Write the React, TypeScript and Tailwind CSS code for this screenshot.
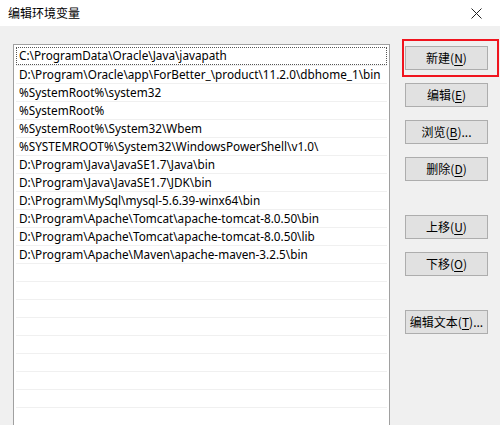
import React from "react";

const items = [
  "C:\\ProgramData\\Oracle\\Java\\javapath",
  "D:\\Program\\Oracle\\app\\ForBetter_\\product\\11.2.0\\dbhome_1\\bin",
  "%SystemRoot%\\system32",
  "%SystemRoot%",
  "%SystemRoot%\\System32\\Wbem",
  "%SYSTEMROOT%\\System32\\WindowsPowerShell\\v1.0\\",
  "D:\\Program\\Java\\JavaSE1.7\\Java\\bin",
  "D:\\Program\\Java\\JavaSE1.7\\JDK\\bin",
  "D:\\Program\\MySql\\mysql-5.6.39-winx64\\bin",
  "D:\\Program\\Apache\\Tomcat\\apache-tomcat-8.0.50\\bin",
  "D:\\Program\\Apache\\Tomcat\\apache-tomcat-8.0.50\\lib",
  "D:\\Program\\Apache\\Maven\\apache-maven-3.2.5\\bin",
];

function Btn({ label, u, tail, mt }: { label: string; u: string; tail?: string; mt: string }) {
  return (
    <div
      className={`${mt} w-[83px] h-[24px] bg-[#e1e1e1] border border-[#adadad] flex items-center justify-center text-[12px] text-black leading-none`}
      style={{ fontFamily: '"Noto Sans CJK SC", sans-serif' }}
    >
      <span>
        {label}(<span className="underline underline-offset-2">{u}</span>){tail}
      </span>
    </div>
  );
}

export default function App() {
  const rows = Array.from({ length: 24 }, (_, i) => items[i] ?? "");
  return (
    <div className="w-[500px] h-[425px] overflow-hidden bg-[#f0f0f0] flex flex-col">
      <div className="h-[26px] bg-white flex items-center justify-between pl-[8px] pr-[18px] shrink-0">
        <span
          className="text-[12px] text-black"
          style={{ fontFamily: '"Noto Sans CJK SC", sans-serif' }}
        >
          编辑环境变量
        </span>
        <svg width="11" height="11" viewBox="0 0 11 11" className="mt-[1px]">
          <path d="M0.5 0.5 L10.5 10.5 M10.5 0.5 L0.5 10.5" stroke="#222" strokeWidth="1" />
        </svg>
      </div>
      <div className="flex pl-[13px] pt-[18px] flex-1">
        <div className="w-[377px] h-[400px] bg-white border border-[#a0a0a0] px-[2px] pt-[2px] shrink-0">
          {rows.map((t, i) => (
            <div
              key={i}
              className={`relative h-[18px] border-b border-[#f0f0f0] pl-[3px] text-[11.75px] leading-[17px] text-black whitespace-nowrap overflow-hidden ${i === 0 ? "h-[19px]" : ""}`}
              style={{ fontFamily: '"Noto Sans", sans-serif' }}
            >
              {i === 0 && (
                <div className="absolute left-0 right-0 top-0 bottom-0 border border-dotted border-[#555]" />
              )}
              {t}
            </div>
          ))}
        </div>
        <div className="flex flex-col pl-[15px] pt-[2px] relative">
          <div className="absolute left-[12px] top-[-5px] w-[97px] h-[38px] border-2 border-[#f0141e]" />
          <Btn label="新建" u="N" mt="mt-0" />
          <Btn label="编辑" u="E" mt="mt-[13px]" />
          <Btn label="浏览" u="B" tail="..." mt="mt-[13px]" />
          <Btn label="删除" u="D" mt="mt-[13px]" />
          <Btn label="上移" u="U" mt="mt-[34px]" />
          <Btn label="下移" u="O" mt="mt-[13px]" />
          <Btn label="编辑文本" u="T" tail="..." mt="mt-[34px]" />
        </div>
      </div>
    </div>
  );
}
